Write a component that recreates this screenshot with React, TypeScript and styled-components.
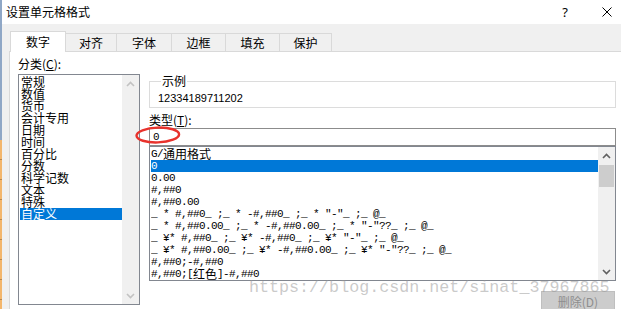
import React from "react";
import styled, { createGlobalStyle } from "styled-components";

const GlobalStyle = createGlobalStyle`
  * { box-sizing: border-box; }
  html, body { margin: 0; padding: 0; background: #f0f0f0; }
  body {
    font-family: "Noto Sans CJK SC", "Noto Sans", sans-serif;
    font-size: 12px;
    color: #000;
  }
`;

const Screen = styled.div`
  position: relative;
  width: 621px;
  height: 309px;
  overflow: hidden;
  display: flex;
`;

const DesktopEdge = styled.div`
  flex: none;
  width: 2px;
  background:
    linear-gradient(#8fa7c6, #8fa7c6) top / 100% 140px no-repeat,
    repeating-linear-gradient(#f3b66c 0 19px, #b8874f 19px 20px);
`;

const Dialog = styled.div`
  flex: 1;
  min-width: 0;
  display: flex;
  flex-direction: column;
  background: #f0f0f0;
`;

const TitleBar = styled.div`
  flex: none;
  height: 24px;
  display: flex;
  align-items: center;
  padding-left: 4px;
  background: #fff;
`;

const TitleText = styled.span`
  font-size: 12px;
  line-height: 16px;
`;

const TitleButton = styled.div<{ $push?: boolean; $gap?: number }>`
  width: 28px;
  height: 24px;
  display: flex;
  align-items: center;
  justify-content: center;
  margin-left: ${(p) => (p.$push ? "auto" : `${p.$gap ?? 0}px`)};
  font-family: "Noto Sans", sans-serif;
  font-size: 13px;
`;

const TabStrip = styled.div`
  flex: none;
  height: 27px;
  display: flex;
  align-items: flex-end;
  padding-left: 8px;
`;

const Tab = styled.div<{ $w: number; $active?: boolean }>`
  position: relative;
  width: ${(p) => p.$w}px;
  height: ${(p) => (p.$active ? 21 : 18)}px;
  margin-bottom: ${(p) => (p.$active ? -1 : 0)}px;
  margin-left: -1px;
  z-index: ${(p) => (p.$active ? 1 : 0)};
  display: flex;
  align-items: center;
  justify-content: center;
  border: 1px solid #d9d9d9;
  border-bottom: none;
  background: ${(p) => (p.$active ? "#fff" : "#f0f0f0")};
  font-size: 12px;
  line-height: 14px;
  &:first-child {
    margin-left: 0;
  }
`;

const Panel = styled.div`
  flex: 1;
  margin-left: 7px;
  background: #fff;
  border-top: 1px solid #d9d9d9;
  border-left: 1px solid #d9d9d9;
  padding: 6px 0 0 8px;
  display: grid;
  grid-template-columns: 122px 467px;
  column-gap: 9px;
  align-items: start;
`;

const Column = styled.div<{ $top?: number }>`
  display: flex;
  flex-direction: column;
  margin-top: ${(p) => p.$top ?? 0}px;
`;

const FieldLabel = styled.div<{ $top?: number; $bottom?: number }>`
  height: 12px;
  line-height: 12px;
  font-size: 12px;
  margin-top: ${(p) => p.$top ?? 0}px;
  margin-bottom: ${(p) => p.$bottom ?? 0}px;
  white-space: nowrap;
  u {
    text-decoration: underline;
    text-underline-offset: 1px;
  }
`;

const ListBox = styled.div<{ $h: number }>`
  height: ${(p) => p.$h}px;
  border: 1px solid #828790;
  display: flex;
  background: #fff;
`;

const ListItems = styled.div<{ $padTop?: number }>`
  flex: 1;
  min-width: 0;
  overflow: hidden;
  padding: ${(p) => p.$padTop ?? 1}px 0 0 1px;
`;

const CategoryItem = styled.div<{ $selected?: boolean }>`
  height: 12px;
  line-height: 12px;
  padding-left: 1px;
  white-space: nowrap;
  font-size: 12px;
  background: ${(p) => (p.$selected ? "#0078d7" : "transparent")};
  color: ${(p) => (p.$selected ? "#fff" : "#000")};
`;

const FormatRow = styled.div<{ $selected?: boolean }>`
  height: 12px;
  display: flex;
  align-items: center;
  overflow: hidden;
  white-space: pre;
  background: ${(p) => (p.$selected ? "#0078d7" : "transparent")};
  color: ${(p) => (p.$selected ? "#fff" : "#000")};
`;

const Narrow = styled.span`
  font-family: "Liberation Mono", "DejaVu Sans Mono", monospace;
  font-size: 11px;
  letter-spacing: -0.6px;
  line-height: 12px;
  white-space: pre;
`;

const Wide = styled.span`
  font-family: "Noto Sans CJK SC", sans-serif;
  font-size: 12px;
  line-height: 12px;
`;

const ScrollBar = styled.div`
  flex: none;
  width: 17px;
  background: #f0f0f0;
  display: flex;
  flex-direction: column;
`;

const ScrollArrow = styled.div`
  flex: none;
  height: 17px;
  display: flex;
  align-items: center;
  justify-content: center;
`;

const ScrollTrack = styled.div`
  flex: 1;
  padding: 1px 1px 0;
`;

const ScrollThumb = styled.div`
  height: 22px;
  background: #cdcdcd;
`;

const GroupBox = styled.fieldset`
  margin: 0;
  min-width: 0;
  padding: 5px 8px 3px;
  border: 1px solid #dcdcdc;
`;

const GroupLegend = styled.legend`
  padding: 0 1px;
  margin-left: 3px;
  font-size: 12px;
  line-height: 12px;
`;

const SampleText = styled.div`
  font-family: "Liberation Sans", Arial, sans-serif;
  font-size: 11px;
  line-height: 12px;
  color: #000;
`;

const TextInput = styled.div`
  margin-top: 2px;
  height: 18px;
  border: 1px solid #8c8c8c;
  display: flex;
  align-items: center;
  padding-left: 3px;
  background: #fff;
`;

const DeleteButton = styled.div`
  align-self: flex-end;
  margin-top: 10px;
  margin-right: 1px;
  width: 74px;
  height: 22px;
  background: #cccccc;
  border: 1px solid #bfbfbf;
  color: #8e8e8e;
  display: flex;
  align-items: center;
  justify-content: center;
  font-size: 12px;
  line-height: 14px;
`;

const Highlight = styled.svg`
  position: absolute;
  left: 135px;
  top: 126px;
  pointer-events: none;
`;

const Watermark = styled.div`
  position: absolute;
  left: 249px;
  top: 279px;
  font-family: "Liberation Mono", monospace;
  font-size: 16.7px;
  line-height: 17px;
  color: rgba(150, 150, 150, 0.5);
  white-space: nowrap;
  pointer-events: none;
`;

const CJK = /([\u2E80-\u9FFF\uFF00-\uFFEF\u3000-\u303F]+)/;

function MixedText({ text }: { text: string }) {
  const parts = text.split(CJK).filter((p) => p.length > 0);
  return (
    <>
      {parts.map((p, i) =>
        CJK.test(p) ? <Wide key={i}>{p}</Wide> : <Narrow key={i}>{p}</Narrow>
      )}
    </>
  );
}

function Chevron({ dir, color }: { dir: "up" | "down"; color: string }) {
  return (
    <svg width="9" height="6" viewBox="0 0 9 6">
      <path
        d={dir === "up" ? "M1 5 L4.5 1.5 L8 5" : "M1 1 L4.5 4.5 L8 1"}
        fill="none"
        stroke={color}
        strokeWidth="1.6"
      />
    </svg>
  );
}

const tabs = [
  { label: "数字", w: 56 },
  { label: "对齐", w: 52 },
  { label: "字体", w: 56 },
  { label: "边框", w: 55 },
  { label: "填充", w: 55 },
  { label: "保护", w: 53 },
];

const categories = [
  "常规",
  "数值",
  "货币",
  "会计专用",
  "日期",
  "时间",
  "百分比",
  "分数",
  "科学记数",
  "文本",
  "特殊",
  "自定义",
];

const formats = [
  "G/通用格式",
  "0",
  "0.00",
  "#,##0",
  "#,##0.00",
  '_ * #,##0_ ;_ * -#,##0_ ;_ * "-"_ ;_ @_ ',
  '_ * #,##0.00_ ;_ * -#,##0.00_ ;_ * "-"??_ ;_ @_ ',
  '_ ¥* #,##0_ ;_ ¥* -#,##0_ ;_ ¥* "-"_ ;_ @_ ',
  '_ ¥* #,##0.00_ ;_ ¥* -#,##0.00_ ;_ ¥* "-"??_ ;_ @_ ',
  "#,##0;-#,##0",
  "#,##0;[红色]-#,##0",
];

export default function App() {
  return (
    <>
      <GlobalStyle />
      <Screen>
        <DesktopEdge />
        <Dialog>
          <TitleBar>
            <TitleText>设置单元格格式</TitleText>
            <TitleButton $push>?</TitleButton>
            <TitleButton $gap={14}>
              <svg width="10" height="10" viewBox="0 0 10 10">
                <path d="M0.5 0.5 L9.5 9.5 M9.5 0.5 L0.5 9.5" stroke="#000" strokeWidth="1" />
              </svg>
            </TitleButton>
          </TitleBar>
          <TabStrip>
            {tabs.map((t, i) => (
              <Tab key={t.label} $w={t.w} $active={i === 0}>
                {t.label}
              </Tab>
            ))}
          </TabStrip>
          <Panel>
            <Column>
              <FieldLabel $bottom={4}>
                分类(<u>C</u>):
              </FieldLabel>
              <ListBox $h={231}>
                <ListItems>
                  {categories.map((c, i) => (
                    <CategoryItem key={c} $selected={i === categories.length - 1}>
                      {c}
                    </CategoryItem>
                  ))}
                </ListItems>
                <ScrollBar>
                  <ScrollArrow>
                    <Chevron dir="up" color="#c2c2c2" />
                  </ScrollArrow>
                  <ScrollTrack />
                  <ScrollArrow>
                    <Chevron dir="down" color="#c2c2c2" />
                  </ScrollArrow>
                </ScrollBar>
              </ListBox>
            </Column>
            <Column $top={17}>
              <GroupBox>
                <GroupLegend>示例</GroupLegend>
                <SampleText>12334189711202</SampleText>
              </GroupBox>
              <FieldLabel $top={6}>
                类型(<u>T</u>):
              </FieldLabel>
              <TextInput>
                <Narrow>0</Narrow>
              </TextInput>
              <ListBox $h={135}>
                <ListItems $padTop={1}>
                  {formats.map((f, i) => (
                    <FormatRow key={f} $selected={i === 1}>
                      <MixedText text={f} />
                    </FormatRow>
                  ))}
                </ListItems>
                <ScrollBar>
                  <ScrollArrow>
                    <Chevron dir="up" color="#606060" />
                  </ScrollArrow>
                  <ScrollTrack>
                    <ScrollThumb />
                  </ScrollTrack>
                  <ScrollArrow>
                    <Chevron dir="down" color="#606060" />
                  </ScrollArrow>
                </ScrollBar>
              </ListBox>
              <DeleteButton>删除(D)</DeleteButton>
            </Column>
          </Panel>
        </Dialog>
        <Highlight width="46" height="18" viewBox="0 0 46 18">
          <ellipse
            cx="22.8"
            cy="9"
            rx="21.3"
            ry="7.4"
            fill="none"
            stroke="#e8322c"
            strokeWidth="2.4"
            transform="rotate(-2 22.8 9)"
          />
        </Highlight>
        <Watermark>https://blog.csdn.net/sinat_37967865</Watermark>
      </Screen>
    </>
  );
}
